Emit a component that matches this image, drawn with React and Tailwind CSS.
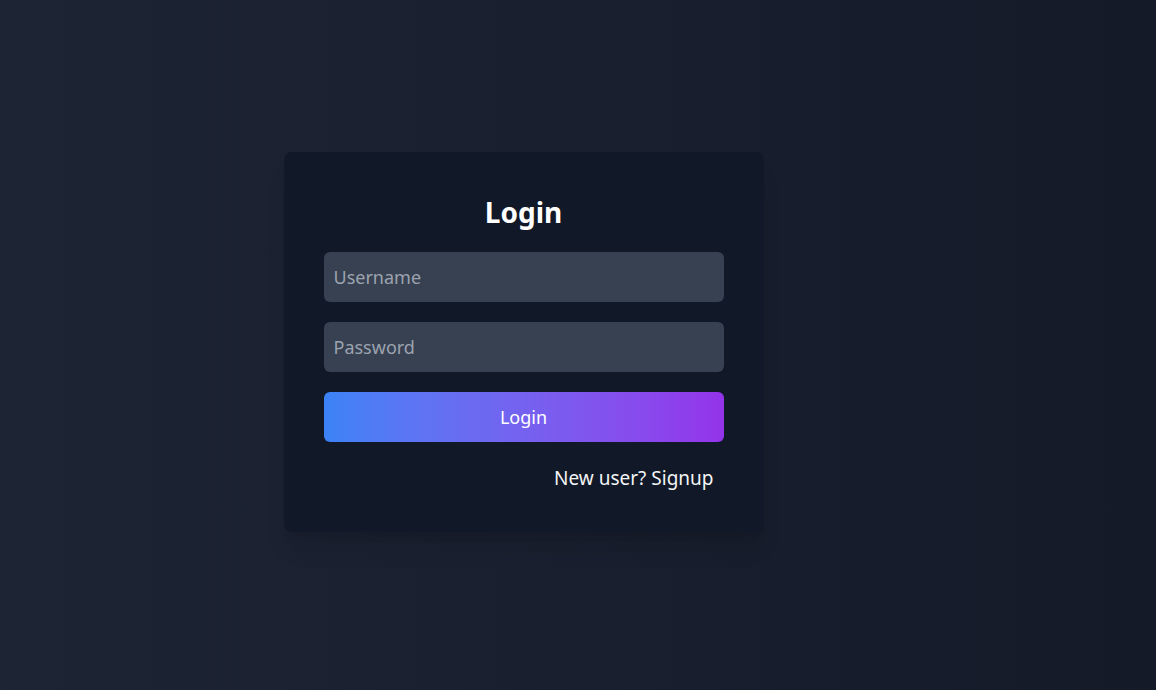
export default function App() {
  return (
    <div
      className="flex min-h-[690px] w-full items-center justify-center bg-gradient-to-r from-[#1d2434] to-[#141a28]"
      style={{ fontFamily: '"Noto Sans", "Open Sans", sans-serif' }}
    >
      {/* Card */}
      <div className="mr-[109px] -mt-[7px] w-[480px] rounded-lg bg-[#111827] p-10 shadow-xl">
        <h2 className="mb-5 text-center text-[28px] leading-10 font-bold text-white">
          Login
        </h2>

        <div className="flex flex-col gap-5">
          <input
            className="h-[50px] w-full rounded-md bg-[#374151] px-2.5 text-lg text-white outline-none placeholder:text-[#9ca3af]"
            placeholder="Username"
          />
          <input
            type="password"
            className="h-[50px] w-full rounded-md bg-[#374151] px-2.5 text-lg text-white outline-none placeholder:text-[#9ca3af]"
            placeholder="Password"
          />
          <button className="h-[50px] w-full rounded-md bg-gradient-to-r from-[#3b82f6] to-[#9333ea] text-lg text-white">
            Login
          </button>
        </div>

        <p className="mt-[22px] pr-2.5 text-right text-[19px] leading-7 text-[#f3f4f6]">
          New user? Signup
        </p>
      </div>
    </div>
  );
}
